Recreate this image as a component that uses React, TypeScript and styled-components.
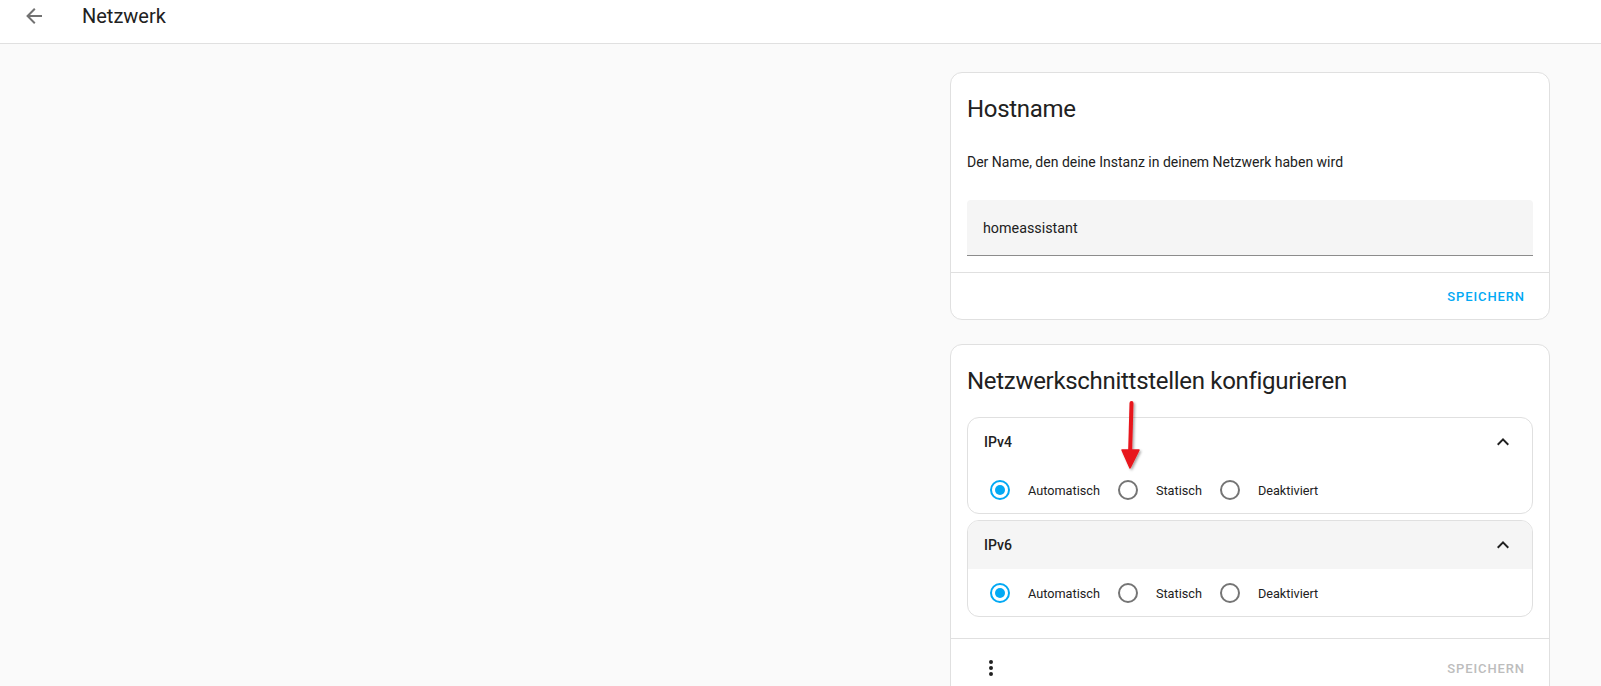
import React from "react";
import styled, { createGlobalStyle } from "styled-components";

const GlobalStyle = createGlobalStyle`
  html, body {
    margin: 0;
    padding: 0;
    background: #fafafa;
    font-family: Roboto, "Noto Sans", "Liberation Sans", sans-serif;
    color: #212121;
    -webkit-font-smoothing: antialiased;
  }
  * { box-sizing: border-box; }
`;

const Page = styled.div`
  position: relative;
  min-height: 686px;
  background: #fafafa;
`;

const Toolbar = styled.header`
  display: flex;
  align-items: center;
  height: 44px;
  padding: 0 0 11px 10px;
  background: #fff;
  border-bottom: 1px solid #e0e0e0;
`;

const IconButton = styled.button<{ $color?: string; $flush?: boolean }>`
  width: 48px;
  height: 48px;
  flex: 0 0 48px;
  display: flex;
  align-items: center;
  justify-content: center;
  border: none;
  background: transparent;
  padding: 0;
  margin: ${(p) => (p.$flush ? "0" : "-8px 0")};
  color: ${(p) => p.$color || "#727272"};
  cursor: pointer;
`;

const ToolbarTitle = styled.div`
  margin-left: 24px;
  font-size: 20px;
  font-weight: 400;
  color: #212121;
  line-height: 28px;
`;

const Main = styled.main`
  display: flex;
  flex-direction: column;
  align-items: flex-end;
  gap: 24px;
  padding: 28px 51px 0 0;
`;

const Card = styled.section`
  width: 600px;
  background: #fff;
  border: 1px solid #e0e0e0;
  border-radius: 12px;
`;

const CardHeader = styled.h2`
  margin: 0;
  padding: 12px 16px 12px;
  font-size: 24px;
  line-height: 48px;
  font-weight: 400;
  color: #212121;
  letter-spacing: -0.3px;
`;

const CardContent = styled.div<{ $bottom?: number }>`
  padding: 0 16px ${(p) => p.$bottom ?? 16}px;
`;

const Description = styled.p`
  margin: 7px 0 28px;
  font-size: 14px;
  line-height: 20px;
  color: #212121;
`;

const TextField = styled.div`
  height: 56px;
  display: flex;
  align-items: center;
  padding: 0 16px;
  background: #f5f5f5;
  border-radius: 4px 4px 0 0;
  border-bottom: 1px solid #8c8c8c;
  font-size: 14.3px;
  color: #212121;
`;

const CardActions = styled.div<{ $split?: boolean }>`
  display: flex;
  align-items: center;
  justify-content: ${(p) => (p.$split ? "space-between" : "flex-end")};
  padding: 5px 16px;
  border-top: 1px solid #e0e0e0;
`;

const TextButton = styled.button<{ $disabled?: boolean }>`
  height: 36px;
  padding: 0 8px;
  border: none;
  background: transparent;
  font-family: inherit;
  font-size: 13px;
  font-weight: 500;
  letter-spacing: 0.9px;
  text-transform: uppercase;
  color: ${(p) => (p.$disabled ? "#bdbdbd" : "#03a9f4")};
  cursor: pointer;
`;

const Panel = styled.div`
  border: 1px solid #e0e0e0;
  border-radius: 12px;
  overflow: hidden;
  & + & {
    margin-top: 6px;
  }
`;

const PanelHeader = styled.div<{ $focused?: boolean }>`
  height: 48px;
  display: flex;
  align-items: center;
  justify-content: space-between;
  padding: 0 17px 0 16px;
  background: ${(p) => (p.$focused ? "#f5f5f5" : "transparent")};
  font-size: 14px;
  font-weight: 500;
  color: #212121;
`;

const RadioRow = styled.div`
  display: flex;
  align-items: center;
  padding: 4px 12px 3px;
`;

const RadioOption = styled.label`
  display: flex;
  align-items: center;
  cursor: pointer;
`;

const RadioBox = styled.span`
  width: 40px;
  height: 40px;
  display: flex;
  align-items: center;
  justify-content: center;
`;

const RadioCircle = styled.span<{ $checked?: boolean }>`
  width: 20px;
  height: 20px;
  border-radius: 50%;
  border: 2px solid ${(p) => (p.$checked ? "#03a9f4" : "#757575")};
  display: flex;
  align-items: center;
  justify-content: center;
  &::after {
    content: "";
    width: 10px;
    height: 10px;
    border-radius: 50%;
    background: ${(p) => (p.$checked ? "#03a9f4" : "transparent")};
  }
`;

const RadioLabel = styled.span`
  margin: 0 8px;
  font-size: 12.7px;
  color: #212121;
`;

const Annotation = styled.svg`
  position: absolute;
  left: 1114px;
  top: 398px;
  overflow: visible;
  pointer-events: none;
`;

const ArrowLeft = () => (
  <svg width="24" height="24" viewBox="0 0 24 24" fill="currentColor">
    <path d="M20,11V13H8L13.5,18.5L12.08,19.92L4.16,12L12.08,4.08L13.5,5.5L8,11H20Z" />
  </svg>
);

const ChevronUp = () => (
  <svg width="24" height="24" viewBox="0 0 24 24" fill="#212121">
    <path d="M7.41,15.41L12,10.83L16.59,15.41L18,14L12,8L6,14L7.41,15.41Z" />
  </svg>
);

const DotsVertical = () => (
  <svg width="24" height="24" viewBox="0 0 24 24" fill="#212121">
    <path d="M12,16A2,2 0 0,1 14,18A2,2 0 0,1 12,20A2,2 0 0,1 10,18A2,2 0 0,1 12,16M12,10A2,2 0 0,1 14,12A2,2 0 0,1 12,14A2,2 0 0,1 10,12A2,2 0 0,1 12,10M12,4A2,2 0 0,1 14,6A2,2 0 0,1 12,8A2,2 0 0,1 10,6A2,2 0 0,1 12,4Z" />
  </svg>
);

const options = ["Automatisch", "Statisch", "Deaktiviert"];

const IpPanel = ({ title, focused }: { title: string; focused?: boolean }) => (
  <Panel>
    <PanelHeader $focused={focused}>
      <span>{title}</span>
      <ChevronUp />
    </PanelHeader>
    <RadioRow>
      {options.map((o, i) => (
        <RadioOption key={o}>
          <RadioBox>
            <RadioCircle $checked={i === 0} />
          </RadioBox>
          <RadioLabel>{o}</RadioLabel>
        </RadioOption>
      ))}
    </RadioRow>
  </Panel>
);

export default function App() {
  return (
    <Page>
      <GlobalStyle />
      <Toolbar>
        <IconButton aria-label="Zurück">
          <ArrowLeft />
        </IconButton>
        <ToolbarTitle>Netzwerk</ToolbarTitle>
      </Toolbar>
      <Main>
        <Card>
          <CardHeader>Hostname</CardHeader>
          <CardContent>
            <Description>Der Name, den deine Instanz in deinem Netzwerk haben wird</Description>
            <TextField>homeassistant</TextField>
          </CardContent>
          <CardActions>
            <TextButton>Speichern</TextButton>
          </CardActions>
        </Card>
        <Card>
          <CardHeader>Netzwerkschnittstellen konfigurieren</CardHeader>
          <CardContent $bottom={21}>
            <IpPanel title="IPv4" />
            <IpPanel title="IPv6" focused />
          </CardContent>
          <CardActions $split>
            <IconButton $color="#212121" $flush aria-label="Menü">
              <DotsVertical />
            </IconButton>
            <TextButton $disabled>Speichern</TextButton>
          </CardActions>
        </Card>
      </Main>
      <Annotation width="32" height="76" viewBox="0 0 32 76">
        <defs>
          <filter id="sh" x="-50%" y="-50%" width="200%" height="200%">
            <feDropShadow dx="1.5" dy="1.5" stdDeviation="1.2" floodColor="#000" floodOpacity="0.35" />
          </filter>
        </defs>
        <g filter="url(#sh)">
          <line x1="17.5" y1="5" x2="16" y2="58" stroke="#e8141b" strokeWidth="4" strokeLinecap="round" />
          <polygon points="8,52 25,52 16,70" fill="#e8141b" stroke="#e8141b" strokeWidth="1.5" strokeLinejoin="round" />
        </g>
      </Annotation>
    </Page>
  );
}
